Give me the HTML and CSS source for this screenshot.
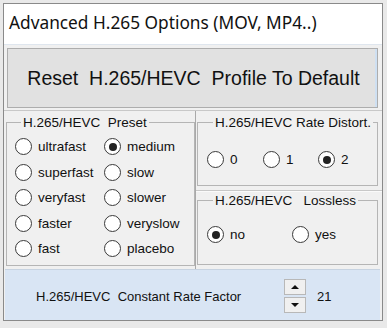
FILE: index.html
```html
<!DOCTYPE html>
<html lang="en">
<head>
    <meta charset="UTF-8">
    <title>Advanced H.265 Options</title>
    <link rel="stylesheet" href="styles.css">
</head>
<body>

    <div class="window">
        <!-- Title -->
        <div class="title">Advanced H.265 Options (MOV, MP4..)</div>

        <!-- Reset button -->
        <div class="reset-wrap">
            <button class="reset">Reset&nbsp; H.265/HEVC&nbsp; Profile To Default</button>
        </div>

        <!-- Option groups -->
        <div class="options">
            <div class="left-panel">
                <fieldset class="group preset">
                    <legend>H.265/HEVC&nbsp; Preset</legend>
                    <div class="preset-grid">
                        <label class="radio"><span class="dot"></span>ultrafast</label>
                        <label class="radio checked"><span class="dot"></span>medium</label>
                        <label class="radio"><span class="dot"></span>superfast</label>
                        <label class="radio"><span class="dot"></span>slow</label>
                        <label class="radio"><span class="dot"></span>veryfast</label>
                        <label class="radio"><span class="dot"></span>slower</label>
                        <label class="radio"><span class="dot"></span>faster</label>
                        <label class="radio"><span class="dot"></span>veryslow</label>
                        <label class="radio"><span class="dot"></span>fast</label>
                        <label class="radio"><span class="dot"></span>placebo</label>
                    </div>
                </fieldset>
            </div>

            <div class="right-panel">
                <div class="sub-panel top">
                    <fieldset class="group rate">
                        <legend>H.265/HEVC Rate Distort.</legend>
                        <div class="rate-row">
                            <label class="radio"><span class="dot"></span>0</label>
                            <label class="radio"><span class="dot"></span>1</label>
                            <label class="radio checked"><span class="dot"></span>2</label>
                        </div>
                    </fieldset>
                </div>
                <div class="sub-panel bottom">
                    <fieldset class="group lossless">
                        <legend>H.265/HEVC&nbsp;&nbsp; Lossless</legend>
                        <div class="lossless-row">
                            <label class="radio checked"><span class="dot"></span>no</label>
                            <label class="radio"><span class="dot"></span>yes</label>
                        </div>
                    </fieldset>
                </div>
            </div>
        </div>

        <!-- Constant rate factor -->
        <div class="crf">
            <span class="crf-label">H.265/HEVC&nbsp; Constant Rate Factor</span>
            <div class="spinner">
                <div class="spin-btn"><span class="arrow up"></span></div>
                <div class="spin-btn"><span class="arrow down"></span></div>
            </div>
            <span class="crf-value">21</span>
        </div>
    </div>

</body>
</html>
```

FILE: styles.css
```css
body {
    margin: 0;
    background-color: #e9e9e9;
    font-family: "Liberation Sans", Arial, sans-serif;
    color: #111;
}
.window {
    width: 378px;
    height: 316px;
    margin: 3px 0 0 3px;
    border: 1px solid #8a8a8a;
    background-color: #f0f0f0;
    display: flex;
    flex-direction: column;
}
.title {
    height: 40px;
    background-color: #fff;
    font-family: "Noto Sans", "Open Sans", sans-serif;
    font-size: 17.3px;
    line-height: 38px;
    padding-left: 5px;
    border-bottom: 1px solid #dfe6ee;
}
.reset-wrap {
    padding: 3px 4px 0 3px;
}
.reset {
    width: 100%;
    height: 60px;
    background-color: #e1e1e1;
    border: 1px solid #adadad;
    box-shadow: inset -2px 0 0 #cfe0f2;
    font-family: "Liberation Sans", Arial, sans-serif;
    font-size: 19.5px;
    color: #111;
    padding: 0 0 0 2px;
}
.options {
    margin-top: 2px;
    border-top: 1px solid #c8c8c8;
    display: flex;
    height: 158px;
}
.left-panel {
    width: 189px;
    border-right: 1px solid #a9a9a9;
    padding: 4px 0 0 2px;
}
.right-panel {
    flex: 1;
    display: flex;
    flex-direction: column;
}
.sub-panel.top {
    height: 75px;
    border-bottom: 1px solid #c8c8c8;
    padding: 4px 4px 0 1px;
}
.sub-panel.bottom {
    flex: 1;
    border-top: 1px solid #fafafa;
    padding: 1px 4px 0 1px;
}
.group {
    margin: 0;
    border: 1px solid #b5b5b5;
    border-radius: 0;
    font-size: 13.5px;
    box-sizing: border-box;
}
.group legend {
    padding: 0 2px;
    margin-left: 6px;
    line-height: 15px;
}
.preset {
    height: 151px;
    padding: 4px 0 0 8px;
}
.preset-grid {
    display: grid;
    grid-template-columns: 89px 80px;
    grid-auto-rows: 25.5px;
}
.rate {
    height: 71px;
    padding: 21px 0 0 9px;
}
.rate-row {
    display: grid;
    grid-template-columns: 56px 55px 40px;
}
.lossless {
    height: 72px;
    padding: 18px 0 0 9px;
}
.lossless-row {
    display: grid;
    grid-template-columns: 85px 60px;
}
.radio {
    display: flex;
    align-items: center;
    gap: 6px;
    font-size: 13.5px;
}
.dot {
    width: 15px;
    height: 15px;
    border: 1px solid #3a3a3a;
    border-radius: 50%;
    background-color: #fff;
    display: flex;
    align-items: center;
    justify-content: center;
    flex-shrink: 0;
}
.radio.checked .dot::after {
    content: "";
    width: 8px;
    height: 8px;
    border-radius: 50%;
    background-color: #222;
}
.crf {
    flex: 1;
    margin: 0 2px 0 1px;
    padding-top: 2px;
    background-color: #d9e5f4;
    border-top: 1px solid #c7d3e1;
    display: flex;
    align-items: center;
    font-size: 13px;
}
.crf-label {
    margin-left: 31px;
    width: 248px;
}
.spinner {
    display: flex;
    flex-direction: column;
    gap: 2px;
}
.spin-btn {
    width: 20px;
    height: 14px;
    background-color: #f0f0f0;
    border: 1px solid #b8b8b8;
    display: flex;
    align-items: center;
    justify-content: center;
}
.arrow {
    width: 0;
    height: 0;
    border-left: 4px solid transparent;
    border-right: 4px solid transparent;
}
.arrow.up {
    border-bottom: 4px solid #111;
}
.arrow.down {
    border-top: 4px solid #111;
}
.crf-value {
    margin-left: 11px;
}
```
